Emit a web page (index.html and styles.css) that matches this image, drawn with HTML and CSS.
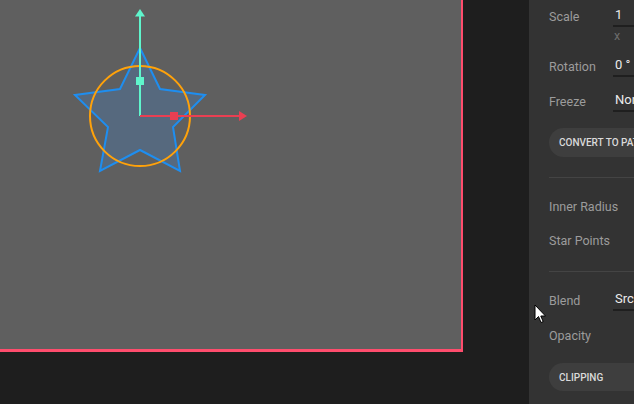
FILE: index.html
```html
<!DOCTYPE html>
<html>
<head>
<meta charset="utf-8">
<link rel="stylesheet" href="styles.css">
</head>
<body>
<div class="app">
  <div class="stage">
    <div class="canvas">
      <svg class="scene" width="461" height="349" viewBox="0 0 461 349">
        <polygon points="140,48 160,89 205,95 173,127 180,171 140,150 100,171 108,127 75,95 120,89" fill="#56697e" stroke="#1e8ef0" stroke-width="2" stroke-linejoin="miter"/>
        <circle cx="140" cy="116" r="50" fill="none" stroke="#ffa20a" stroke-width="2"/>
        <line x1="140" y1="116" x2="140" y2="16" stroke="#5ff5cc" stroke-width="2"/>
        <polygon points="140,9 135,16.5 145,16.5" fill="#5ff5cc"/>
        <rect x="136" y="77" width="8" height="8" fill="#5ff5cc"/>
        <line x1="140" y1="116" x2="240" y2="116" stroke="#ea3f52" stroke-width="2"/>
        <polygon points="247,116 239,111 239,121" fill="#ea3f52"/>
        <rect x="170" y="112" width="8" height="8" fill="#ea3f52"/>
      </svg>
    </div>
  </div>
  <aside class="panel">
    <div class="row row-scale">
      <span class="label">Scale</span>
      <span class="value">1</span>
    </div>
    <div class="sub">x</div>
    <div class="row">
      <span class="label">Rotation</span>
      <span class="value">0 °</span>
    </div>
    <div class="row row-freeze">
      <span class="label">Freeze</span>
      <span class="value">None</span>
    </div>
    <div class="btn btn-convert">CONVERT TO PATH</div>
    <div class="divider div-1"></div>
    <div class="row">
      <span class="label">Inner Radius</span>
    </div>
    <div class="row">
      <span class="label">Star Points</span>
    </div>
    <div class="divider div-2"></div>
    <div class="row">
      <span class="label">Blend</span>
      <span class="value">Src</span>
    </div>
    <div class="row row-opacity">
      <span class="label">Opacity</span>
    </div>
    <div class="btn btn-clip">CLIPPING</div>
  </aside>
  <svg class="cursor" width="14" height="21" viewBox="0 0 14 21">
    <path d="M1,1 L1,16 L4.5,12.5 L7,18.5 L9.2,17.6 L6.8,12 L11.5,12 Z" fill="#ffffff" stroke="#000000" stroke-width="1" stroke-linejoin="miter"/>
  </svg>
</div>
</body>
</html>
```

FILE: styles.css
```css
* { box-sizing: border-box; }
html, body {
  margin: 0;
  padding: 0;
  width: 634px;
  height: 404px;
  overflow: hidden;
  background: #1e1e1e;
  font-family: Roboto, "Liberation Sans", sans-serif;
}
.app {
  position: relative;
  display: flex;
  width: 634px;
  height: 404px;
}
.stage {
  width: 529px;
  flex: none;
  background: #1e1e1e;
}
.canvas {
  position: relative;
  width: 463px;
  height: 352px;
  background: #5f5f5f;
  border-right: 2px solid #ff4d6d;
  border-bottom: 3px solid #ff4d6d;
}
.scene {
  position: absolute;
  left: 0;
  top: 0;
}
.panel {
  width: 105px;
  flex: none;
  background: #333333;
  padding-left: 20px;
  padding-top: 1px;
  overflow: hidden;
  display: flex;
  flex-direction: column;
}
.row {
  display: flex;
  align-items: center;
  height: 34px;
  flex: none;
}
.row-scale {
  height: 30px;
}
.row-freeze,
.row-opacity {
  margin-top: 1px;
}
.label {
  width: 64px;
  flex: none;
  font-size: 12.5px;
  color: #9c9c9c;
  white-space: nowrap;
}
.value {
  display: block;
  width: 60px;
  flex: none;
  height: 22px;
  line-height: 20px;
  padding-left: 2px;
  font-size: 13px;
  color: #ececec;
  border-bottom: 2px solid #1f1f1f;
  white-space: nowrap;
}
.sub {
  flex: none;
  height: 11px;
  line-height: 9px;
  padding-left: 65px;
  font-size: 12.5px;
  color: #6c6c6c;
  margin-bottom: 7px;
}
.btn {
  flex: none;
  width: 130px;
  border-radius: 15px;
  background: #3e3e3e;
  color: #dadada;
  font-size: 10px;
  font-weight: 500;
  padding-left: 10px;
  display: flex;
  align-items: center;
  white-space: nowrap;
}
.btn-convert {
  margin-top: 10px;
  height: 29px;
}
.btn-clip {
  margin-top: 11px;
  height: 28px;
}
.divider {
  flex: none;
  height: 1px;
  background: #444444;
  width: 100px;
}
.div-1 {
  margin-top: 20px;
  margin-bottom: 11px;
}
.div-2 {
  margin-top: 14px;
  margin-bottom: 11px;
}
.cursor {
  position: absolute;
  left: 534px;
  top: 304px;
}
```
